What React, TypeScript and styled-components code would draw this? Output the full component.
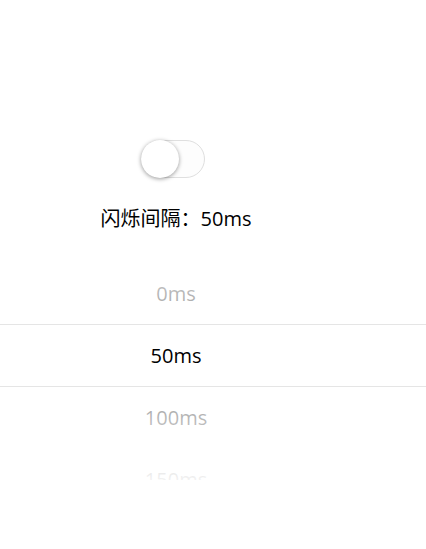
import { useState } from "react";
import styled, { createGlobalStyle } from "styled-components";

const GlobalStyle = createGlobalStyle`
  html, body {
    margin: 0;
    padding: 0;
    background: #ffffff;
    font-family: "Open Sans", "Noto Sans CJK SC", sans-serif;
  }
`;

const ITEM_HEIGHT = 62;
const PICKER_HEIGHT = 248;
const intervals = [0, 50, 100, 150, 200, 250, 300];

export default function App() {
  const [on, setOn] = useState(false);
  const [index] = useState(1);
  // first item sits above the middle row by index rows
  const offset = (PICKER_HEIGHT - ITEM_HEIGHT) / 2 - index * ITEM_HEIGHT;

  return (
    <>
      <GlobalStyle />
      <Page>
        <Header>
          <Switch $on={on} onClick={() => setOn(!on)}>
            <Knob $on={on} />
          </Switch>
          <Label>闪烁间隔：{intervals[index]}ms</Label>
        </Header>
        <Picker>
          <Column style={{ paddingTop: offset }}>
            {intervals.map((v) => (
              <Item key={v}>{v}ms</Item>
            ))}
          </Column>
          <MaskTop />
          <MaskBottom />
          <Indicator />
        </Picker>
      </Page>
    </>
  );
}

const Page = styled.div`
  display: flex;
  flex-direction: column;
  width: 100%;
  padding-top: 140px;
`;

const Header = styled.div`
  width: 352px;
  display: flex;
  flex-direction: column;
  align-items: center;
`;

const Switch = styled.div<{ $on: boolean }>`
  position: relative;
  box-sizing: border-box;
  width: 64px;
  height: 38px;
  margin-right: 6px;
  border-radius: 19px;
  border: 1px solid ${(p) => (p.$on ? "#04be02" : "#dfdfdf")};
  background: ${(p) => (p.$on ? "#04be02" : "#fdfdfd")};
  cursor: pointer;
`;

const Knob = styled.div<{ $on: boolean }>`
  position: absolute;
  top: -1px;
  left: ${(p) => (p.$on ? "25px" : "-1px")};
  width: 38px;
  height: 38px;
  border-radius: 50%;
  background: #ffffff;
  box-shadow: 0 1px 4px rgba(0, 0, 0, 0.4);
`;

const Label = styled.div`
  margin-top: 27px;
  font-size: 20px;
  line-height: 27px;
  color: #000000;
`;

const Picker = styled.div`
  position: relative;
  width: 100%;
  height: ${PICKER_HEIGHT}px;
  overflow: hidden;
`;

const Column = styled.div`
  display: flex;
  flex-direction: column;
`;

const Item = styled.div`
  height: ${ITEM_HEIGHT}px;
  line-height: ${ITEM_HEIGHT}px;
  padding-right: 74px;
  text-align: center;
  font-size: 20px;
  color: #000000;
`;

const MaskTop = styled.div`
  position: absolute;
  left: 0;
  right: 0;
  top: 0;
  height: ${(PICKER_HEIGHT - ITEM_HEIGHT) / 2}px;
  background: linear-gradient(180deg, rgba(255, 255, 255, 0.95), rgba(255, 255, 255, 0.6));
`;

const MaskBottom = styled.div`
  position: absolute;
  left: 0;
  right: 0;
  bottom: 0;
  height: ${(PICKER_HEIGHT - ITEM_HEIGHT) / 2}px;
  background: linear-gradient(0deg, rgba(255, 255, 255, 0.95), rgba(255, 255, 255, 0.6));
`;

const Indicator = styled.div`
  position: absolute;
  left: 0;
  right: 0;
  top: ${(PICKER_HEIGHT - ITEM_HEIGHT) / 2 - 1}px;
  height: ${ITEM_HEIGHT + 1}px;
  box-sizing: border-box;
  border-top: 1px solid #e5e5e5;
  border-bottom: 1px solid #e5e5e5;
  pointer-events: none;
`;
